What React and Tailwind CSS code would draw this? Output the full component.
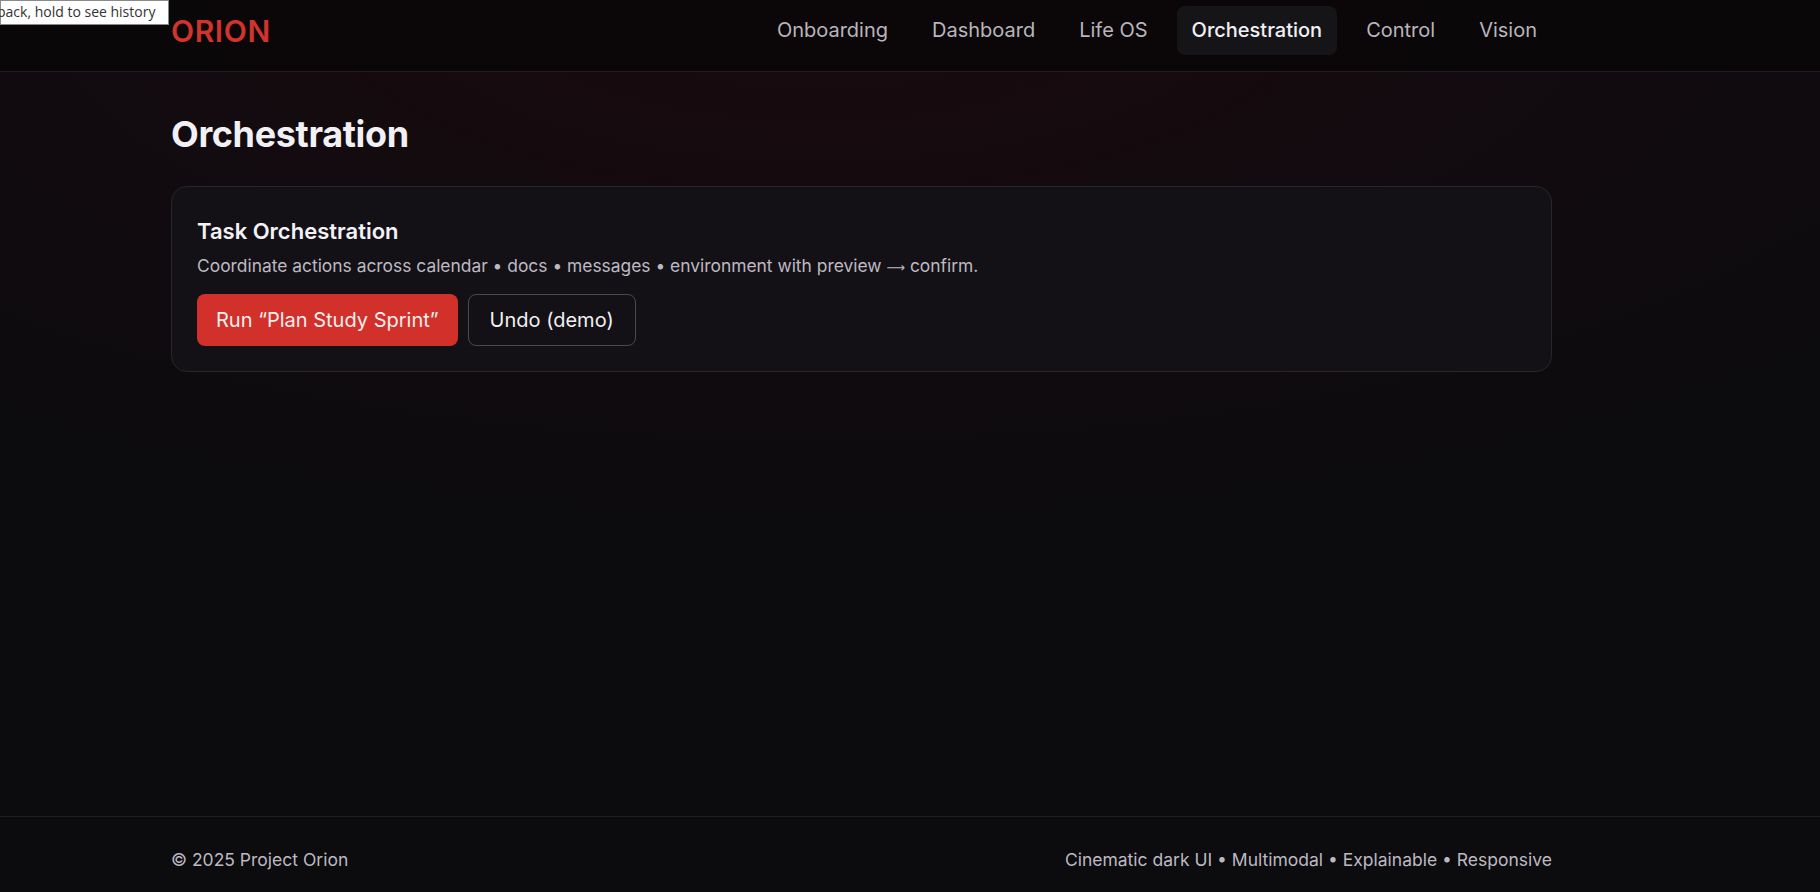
const navItems = ['Onboarding', 'Dashboard', 'Life OS', 'Orchestration', 'Control', 'Vision'];

function Header({ active }) {
  return (
    <header className="border-b border-[#221a1c] bg-[#0a0708]/90">
      <div className="ml-[171px] w-[1381px] flex items-center justify-between pt-[6px] pb-[16px]">
        <div className="text-[30px] font-semibold tracking-[0.02em] text-[#d0342c] leading-none">ORION</div>
        <nav className="flex items-center gap-[14px]">
          {navItems.map((item) => (
            <a
              key={item}
              href="#"
              className={
                item === active
                  ? 'rounded-lg bg-[#151517] px-[15px] py-[10px] text-[20px] leading-[29px] font-medium text-[#f1f0f4]'
                  : 'rounded-lg px-[15px] py-[10px] text-[20px] leading-[29px] text-[#b9b5bd]'
              }
            >
              {item}
            </a>
          ))}
        </nav>
      </div>
    </header>
  );
}

function TaskCard() {
  return (
    <section className="rounded-2xl border border-[#28252b] bg-[#131115] px-[25px] pt-[29px] pb-[25px]">
      <h2 className="text-[22px] leading-[30px] font-semibold text-[#f3f2f6]">Task Orchestration</h2>
      <p className="mt-[8px] text-[17.4px] leading-[24px] text-[#bdb9c2]">
        Coordinate actions across calendar • docs • messages • environment with preview{' '}
        <span style={{ fontFamily: '"DejaVu Sans", sans-serif' }} className="text-[13px]">⟶</span> confirm.
      </p>
      <div className="mt-[14px] flex gap-[10px]">
        <button className="rounded-lg bg-[#d2302a] px-[19px] h-[52px] text-[20px] text-[#fbeeee]">
          Run “Plan Study Sprint”
        </button>
        <button className="rounded-lg border border-[#4b484f] px-[21px] h-[52px] text-[20px] text-[#f1f0f4]">
          Undo (demo)
        </button>
      </div>
    </section>
  );
}

export default function App() {
  return (
    <div
      className="relative flex min-h-screen flex-col bg-[#0c0b0e] bg-[radial-gradient(ellipse_90%_70%_at_45%_0%,#1a0a0e_0%,#120b0f_45%,#0c0b0e_85%)] text-[#eeeef2]"
      style={{ fontFamily: 'Inter, "Noto Sans", sans-serif' }}
    >
      <Header active="Orchestration" />

      <main className="flex-1">
        <div className="ml-[171px] w-[1381px] pt-[35px]">
          <h1 className="text-[36px] leading-[54px] font-bold tracking-[-0.01em] text-[#f1f0f5]">Orchestration</h1>
          <div className="mt-[25px]">
            <TaskCard />
          </div>
        </div>
      </main>

      <footer className="h-[76px] border-t border-[#1f1d22] bg-[#0c0b0e]">
        <div className="ml-[171px] w-[1381px] flex items-center justify-between pt-[31px] text-[17.5px] leading-[24px] text-[#bdb9c2]">
          <span>© 2025 Project Orion</span>
          <span>Cinematic dark UI • Multimodal • Explainable • Responsive</span>
        </div>
      </footer>

      <div
        className="absolute left-0 top-0 h-[25px] w-[169px] border border-[#8a8a8a] bg-white text-[14px] leading-[22px] text-[#333]"
        style={{ fontFamily: '"Open Sans", "Noto Sans", sans-serif' }}
      >
        <span className="block overflow-hidden whitespace-nowrap -ml-[4px]">back, hold to see history</span>
      </div>
    </div>
  );
}
